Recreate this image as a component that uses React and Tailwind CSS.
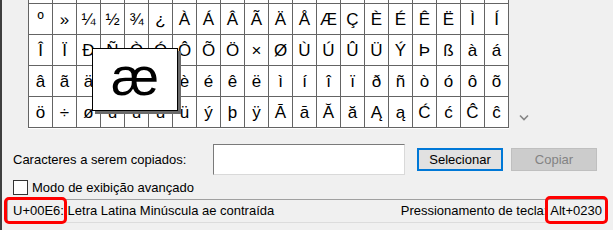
import React from "react";

const ROWS = [-1, 0, 1, 2, 3];

function Cell({ code }) {
  const ch = code === null ? "" : String.fromCharCode(code);
  return (
    <div className="bg-white flex items-center justify-center text-[17px] leading-none font-['Liberation_Sans',Arial,sans-serif] text-black">
      {ch}
    </div>
  );
}

export default function App() {
  const cells = [];
  ROWS.forEach((r) => {
    for (let c = 0; c < 20; c++) {
      cells.push(
        <Cell key={`${r}-${c}`} code={r < 0 ? null : 0xba + r * 20 + c} />
      );
    }
  });

  return (
    <div className="w-[613px] h-[230px] bg-[#f0f0f0] relative overflow-hidden flex font-['Liberation_Sans',Arial,sans-serif] text-[13px] text-black">
      <div className="w-[2px] shrink-0 bg-[#3e3e3e]" />
      <div className="flex-1 flex flex-col">
        {/* grid area */}
        <div className="flex h-[129px] pl-[26px] shrink-0">
          <div className="-mt-[28px] self-start border-b border-white">
            <div className="grid grid-cols-[repeat(20,23px)] auto-rows-[30px] gap-px bg-[#646464] p-px">
              {cells}
            </div>
          </div>
          <div className="flex items-end pl-[10px] pb-[8px]">
            <svg width="10" height="7" viewBox="0 0 10 7">
              <path d="M1 1.5 L5 5.5 L9 1.5" fill="none" stroke="#858585" strokeWidth="1.6" />
            </svg>
          </div>
        </div>

        {/* copy row */}
        <div className="flex items-center h-[31px] mt-[15px] pl-[11px] shrink-0">
          <div className="w-[200px]">Caracteres a serem copiados:</div>
          <div className="w-[192px] h-[31px] bg-white border border-t-[#7a7a7a] border-l-[#7a7a7a] border-r-[#d9d9d9] border-b-[#d9d9d9]" />
          <div className="ml-[12px] w-[86px] h-[23px] bg-[#e1e1e1] border-2 border-[#0078d7] flex items-center justify-center">
            Selecionar
          </div>
          <div className="ml-[8px] w-[86px] h-[23px] bg-[#cccccc] border border-[#bfbfbf] flex items-center justify-center text-[#838383]">
            Copiar
          </div>
        </div>

        {/* checkbox row */}
        <div className="flex items-center h-[15px] mt-[5px] pl-[11px] shrink-0">
          <div className="w-[15px] h-[15px] bg-white border border-[#333333]" />
          <div className="ml-[4px]">Modo de exibição avançado</div>
        </div>

        {/* status bar */}
        <div className="mt-[4px] ml-[5px] w-[600px] h-[24px] flex items-center justify-between pl-[5px] pr-[4px] border-t border-l border-t-[#a0a0a0] border-l-[#a0a0a0] border-r border-b border-r-[#dcdcdc] border-b-[#dcdcdc] shrink-0">
          <div>U+00E6: Letra Latina Minúscula ae contraída</div>
          <div>Pressionamento de tecla: Alt+0230</div>
        </div>
      </div>

      {/* enlarged character popup */}
      <div className="absolute left-[92px] top-[48px] w-[86px] h-[63px] bg-white border border-black shadow-[3px_3px_0_#6b6b6b] flex items-center justify-center text-[54px] leading-none font-['Liberation_Sans',Arial,sans-serif]">
        <span className="-mt-[8px]">æ</span>
      </div>

      {/* red highlight annotations */}
      <div className="absolute left-[4px] top-[197px] w-[63px] h-[27px] border-[3px] border-[#ff0000] rounded-[5px]" />
      <div className="absolute left-[545px] top-[196px] w-[63px] h-[28px] border-[3px] border-[#ff0000] rounded-[5px]" />
    </div>
  );
}
